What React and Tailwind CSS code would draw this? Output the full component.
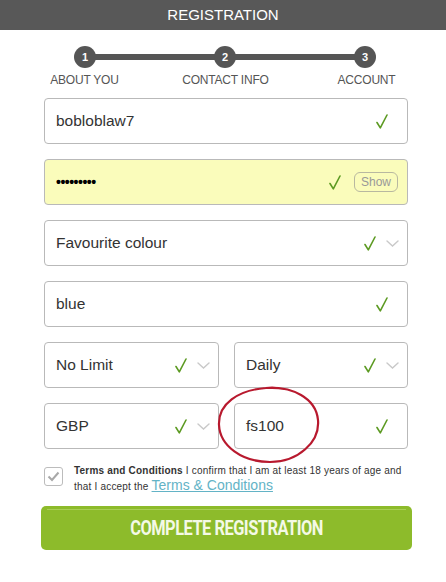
import React from 'react';

const Check = ({ className = '' }) => (
  <svg width="12" height="15" viewBox="0 0 12 15" className={className}>
    <path d="M1 8.5 L4.3 13.8 L11 1" fill="none" stroke="#5c9a22" strokeWidth="1.6" strokeLinecap="round" strokeLinejoin="round" />
  </svg>
);

const Chevron = () => (
  <svg width="13" height="7" viewBox="0 0 13 7">
    <path d="M1 1 L6.5 6 L12 1" fill="none" stroke="#c9c9c9" strokeWidth="1.4" strokeLinecap="round" />
  </svg>
);

function Field({ value, select, extra, bg = 'bg-white', className = '' }) {
  return (
    <div className={`h-[46px] flex items-center rounded-[4px] border border-[#b9b9b9] pl-[11px] ${bg} ${className}`}>
      <span className="flex-1 text-[15.5px] text-[#333]">{value}</span>
      {select ? (
        <div className="flex items-center pr-[8px]">
          <Check />
          <span className="ml-[10px]"><Chevron /></span>
        </div>
      ) : (
        <div className={`flex items-center ${extra ? 'pr-[9px]' : 'pr-[19px]'}`}>
          <Check />
          {extra}
        </div>
      )}
    </div>
  );
}

export default function App() {
  return (
    <div className="relative w-[446px] h-[582px] bg-white overflow-hidden" style={{ fontFamily: '"Liberation Sans", Arial, sans-serif' }}>
      <div className="h-[30px] bg-[#585858] flex items-center justify-center text-white text-[15px]">
        REGISTRATION
      </div>

      {/* steps */}
      <div className="mt-[16px] ml-[74px] flex items-center">
        <div className="w-[22px] h-[22px] rounded-full bg-[#555] text-white text-[11px] font-bold flex items-center justify-center">1</div>
        <div className="w-[120px] h-[6px] bg-[#555] -mx-[1px]" />
        <div className="w-[22px] h-[22px] rounded-full bg-[#555] text-white text-[11px] font-bold flex items-center justify-center">2</div>
        <div className="w-[120px] h-[6px] bg-[#555] -mx-[1px]" />
        <div className="w-[22px] h-[22px] rounded-full bg-[#555] text-white text-[11px] font-bold flex items-center justify-center">3</div>
      </div>
      <div className="flex ml-[14px] mt-[5px] text-[12px] text-[#555] leading-[14px] tracking-[-0.2px]">
        <div className="w-[141px] text-center">ABOUT YOU</div>
        <div className="w-[141px] text-center">CONTACT INFO</div>
        <div className="w-[141px] text-center">ACCOUNT</div>
      </div>

      <div className="ml-[44px] w-[364px] mt-[11px] flex flex-col gap-[15px]">
        <Field value="bobloblaw7" />
        <Field
          value={<span className="text-[14px] font-bold tracking-[-0.5px] text-black">•••••••••</span>}
          bg="bg-[#fafcbb]"
          extra={
            <span className="ml-[13px] px-[6px] h-[20px] flex items-center rounded-[6px] border border-[#b8b8a0] text-[12px] text-[#999]">Show</span>
          }
        />
        <Field value="Favourite colour" select />
        <Field value="blue" />
        <div className="flex gap-[15px]">
          <Field value="No Limit" select className="w-[175px]" />
          <Field value="Daily" select className="flex-1" />
        </div>
        <div className="flex gap-[15px]">
          <Field value="GBP" select className="w-[175px]" />
          <Field value="fs100" className="flex-1" />
        </div>
      </div>

      <div className="ml-[44px] mt-[15px] flex items-start">
        <div className="w-[19px] h-[19px] mt-[3px] rounded-[3px] border border-[#bcbcbc] flex items-center justify-center shrink-0">
          <svg width="13" height="11" viewBox="0 0 13 11">
            <path d="M1.5 5.5 L5 9 L11.5 1.5" fill="none" stroke="#a8a8a8" strokeWidth="2" />
          </svg>
        </div>
        <div className="ml-[11px] w-[336px] text-[10px] leading-[14px] text-[#333] tracking-[0.2px]">
          <span className="font-bold">Terms and Conditions</span> I confirm that I am at least 18 years of age and that I accept the{' '}
          <span className="text-[14px] text-[#63b3c6] underline tracking-normal">Terms &amp; Conditions</span>
        </div>
      </div>

      <div className="ml-[41px] mt-[12px] w-[371px] h-[44px] rounded-[5px] bg-[#8dbb2b] relative flex items-center justify-center">
        <div className="absolute left-[6px] right-[6px] top-[3px] h-[1px] bg-[#a9cf55]" />
        <span className="text-[20px] font-bold text-[#f4f9e6] tracking-[-0.6px] scale-x-[0.82] inline-block" style={{ fontFamily: 'Roboto, "Liberation Sans", sans-serif' }}>
          COMPLETE REGISTRATION
        </span>
      </div>

      {/* hand-drawn red circle */}
      <svg className="absolute left-[214px] top-[384px]" width="110" height="82" viewBox="0 0 110 82">
        <path
          d="M52 4 C78 2 102 14 104 36 C106 58 84 78 56 78 C28 78 6 62 5 41 C4 20 24 6 52 4 C60 3.5 66 4 70 5"
          fill="none"
          stroke="#b8192e"
          strokeWidth="2.2"
          strokeLinecap="round"
        />
      </svg>
    </div>
  );
}
